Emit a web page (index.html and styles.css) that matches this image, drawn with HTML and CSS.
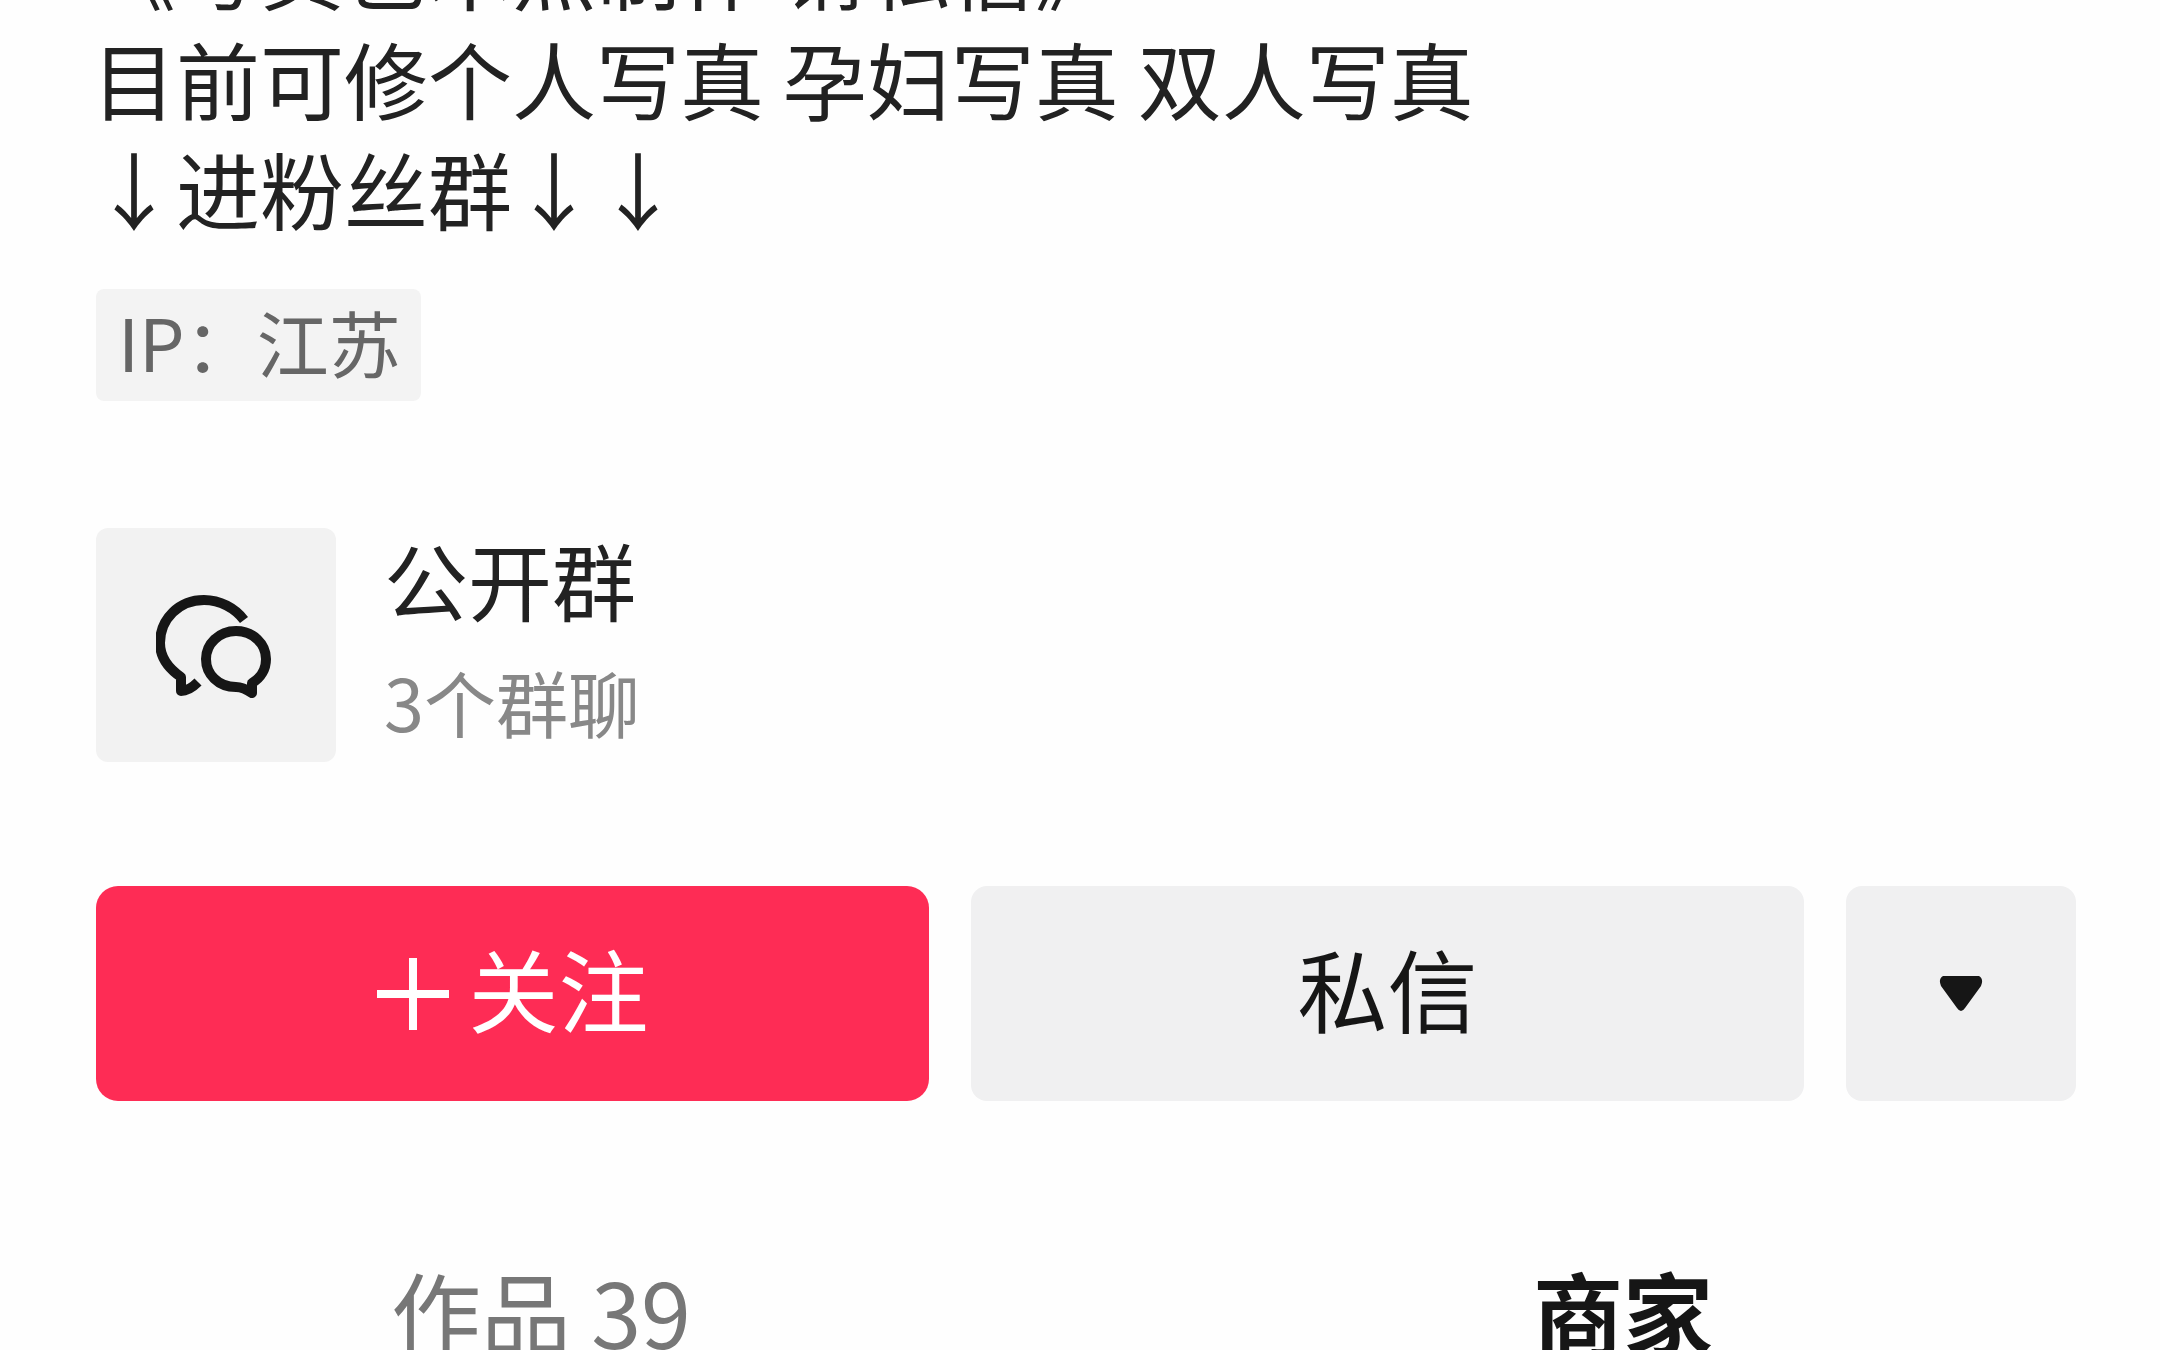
FILE: index.html
```html
<!DOCTYPE html>
<html lang="zh-CN">
<head>
<meta charset="utf-8">
<title>个人主页</title>
<link rel="stylesheet" href="styles.css">
</head>
<body>
<main class="profile">
  <p class="bio">《写真艺术照制作 请私信》<br>目前可修个人写真 孕妇写真 双人写真<br>↓进粉丝群↓↓</p>

  <div class="details">
    <span class="ip">IP：江苏</span>

    <a class="group" href="#groups">
      <span class="group-icon">
        <svg viewBox="0 0 120 110" width="120" height="110" aria-hidden="true">
          <path d="M88 30C79 18 64 10 48 10C23 10 4 29 4 53C4 67 12 78 25 87V101C31 101 37 97 42 92"/>
          <path d="M96 103V93C105 88 110 79 110 69C110 54 97 41 80 41C63 41 50 54 50 69C50 84 62 97 80 97C86 97 90 99 96 103Z"/>
        </svg>
      </span>
      <span class="group-text">
        <span class="group-title">公开群</span>
        <span class="group-count">3个群聊</span>
      </span>
    </a>

    <div class="actions">
      <button class="button follow" type="button">
        <svg viewBox="0 0 72 72" width="72" height="72" aria-hidden="true"><path d="M36 0V72M0 36H72"/></svg>
        <span class="label">关注</span>
      </button>
      <button class="button" type="button"><span class="label">私信</span></button>
      <button class="button more" type="button" aria-label="更多">
        <svg viewBox="0 0 44 38" width="44" height="38" aria-hidden="true"><path d="M4 1H40Q45 4 42 11L26 33Q22 39 18 33L2 11Q-1 4 4 1Z"/></svg>
      </button>
    </div>
  </div>

  <nav class="tabs">
    <a class="tab" href="#works">作品 39</a>
    <a class="tab active" href="#shop" aria-current="page">商家</a>
  </nav>
</main>
</body>
</html>
```
FILE: styles.css
```css
* {
  box-sizing: border-box;
}

body {
  margin: 0;
  overflow: hidden;
  background: #fefefe;
  color: #222;
  font-family: "Noto Sans CJK SC", sans-serif;
  font-size: 84px;
  line-height: 110px;
}

a {
  color: inherit;
  text-decoration: none;
}

/* The page is scrolled so that the first bio line is cut by the top edge. */
.profile {
  margin-top: -87px;
}

.bio {
  margin: 0;
  padding: 0 92px;
}

.details {
  padding: 46px 84px 0 96px;
}

.ip {
  display: block;
  width: fit-content;
  padding: 0 20px 8px 22px;
  background: #f3f3f3;
  border-radius: 8px;
  color: #666;
  font-size: 72px;
  line-height: 104px;
}

.group {
  display: flex;
  align-items: center;
  gap: 48px;
  margin-top: 123px;
}

.group-icon {
  display: flex;
  align-items: center;
  justify-content: center;
  width: 240px;
  height: 234px;
  background: #f2f2f2;
  border-radius: 12px;
}

.group-icon svg {
  fill: none;
  stroke: #161616;
  stroke-width: 10;
  stroke-linejoin: round;
}

.group-text {
  display: flex;
  flex-direction: column;
  gap: 12px;
  padding-bottom: 10px;
}

.group-count {
  color: #888;
  font-size: 72px;
}

.actions {
  display: grid;
  grid-template-columns: 1fr 1fr 230px;
  gap: 42px;
  margin-top: 120px;
}

.button {
  display: flex;
  align-items: center;
  justify-content: center;
  gap: 20px;
  height: 215px;
  padding: 0;
  border: 0;
  border-radius: 16px;
  background: #f0f0f1;
  color: #161616;
  font: inherit;
  font-size: 90px;
}

.label {
  padding-bottom: 14px;
}

.follow {
  border-radius: 22px;
  background: #fe2c55;
  color: #fff;
}

.follow svg {
  fill: none;
  stroke: #fff;
  stroke-width: 8;
}

.more svg {
  fill: #161616;
}

.tabs {
  display: grid;
  grid-template-columns: 1fr 1fr;
  gap: 8px;
  margin-top: 154px;
  padding-left: 4px;
  font-size: 90px;
  text-align: center;
}

.tab {
  color: #777;
}

.tab.active {
  color: #161616;
  font-weight: 700;
}
```
